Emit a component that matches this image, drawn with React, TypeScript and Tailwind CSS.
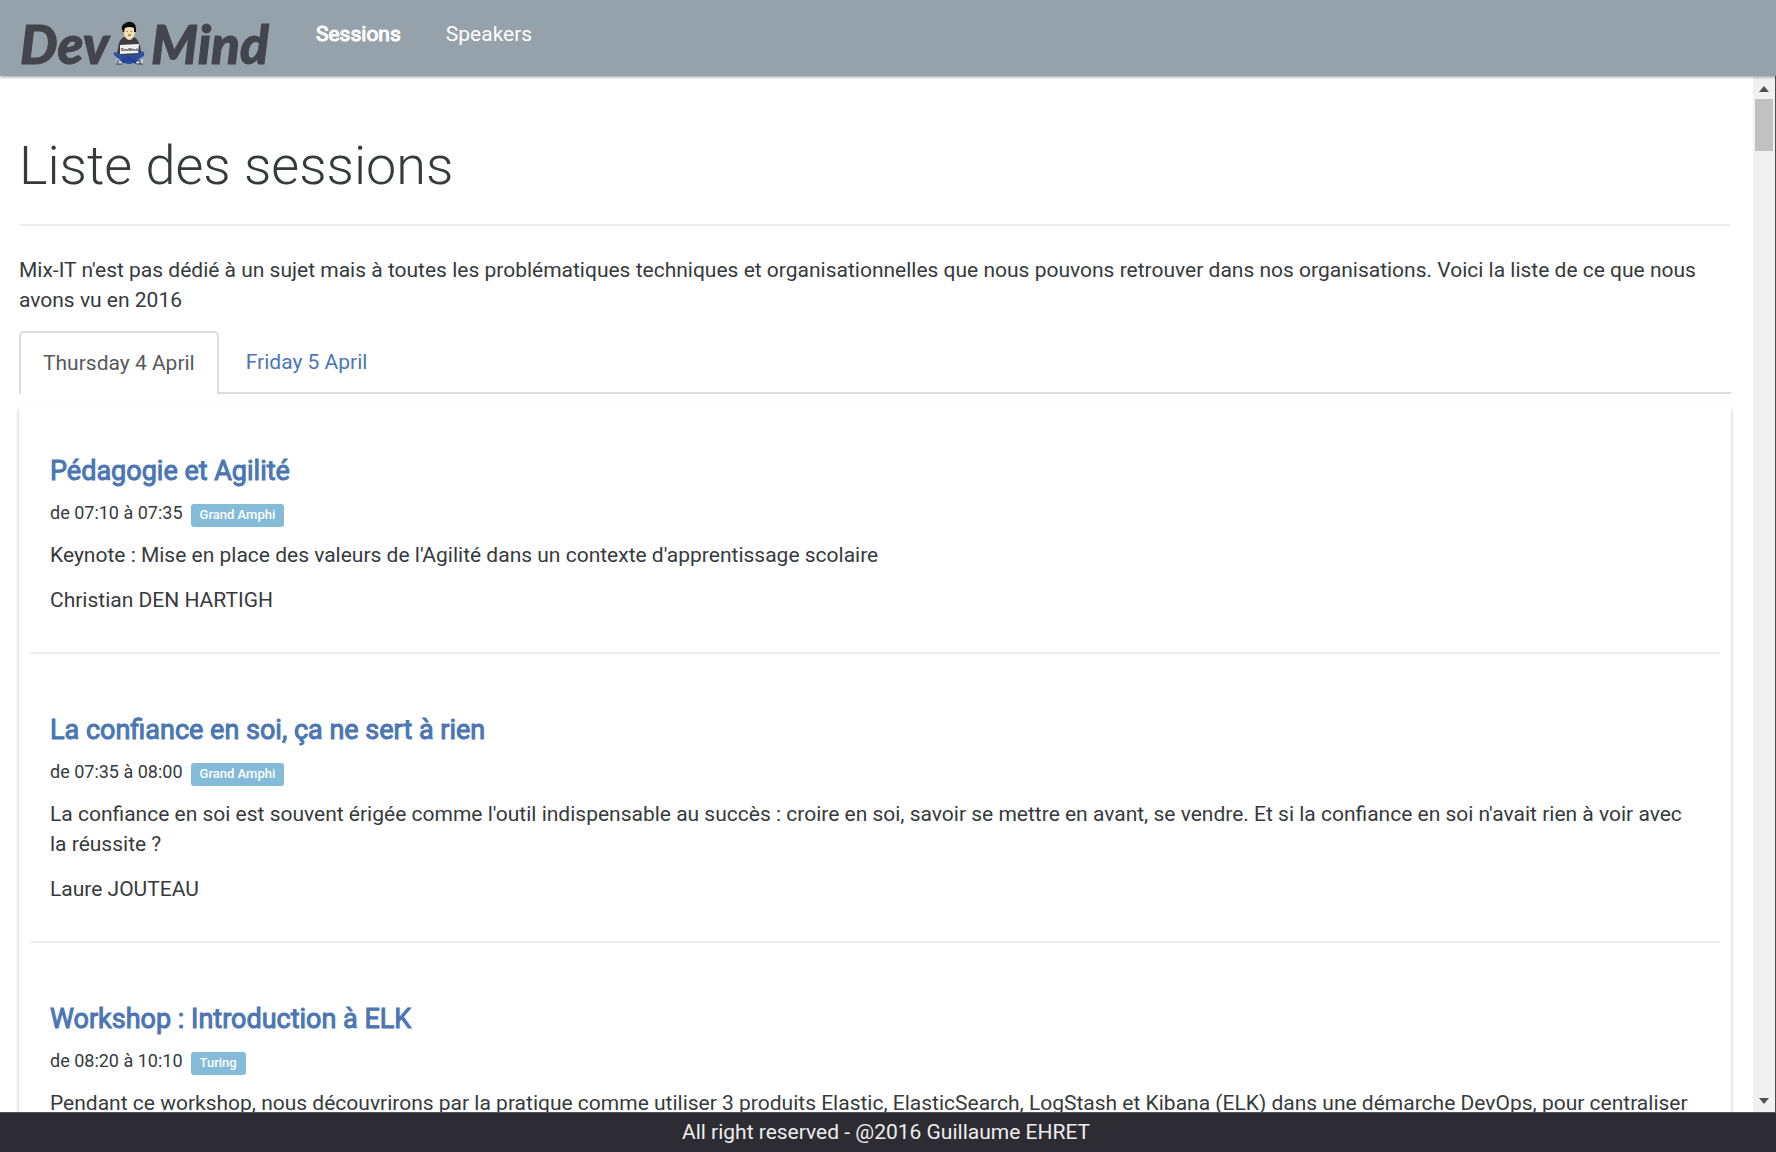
import React from "react";

type Session = {
  title: string;
  time: string;
  room: string;
  text: string;
  speaker: string;
};

const sessions: Session[] = [
  {
    title: "Pédagogie et Agilité",
    time: "de 07:10 à 07:35",
    room: "Grand Amphi",
    text: "Keynote : Mise en place des valeurs de l'Agilité dans un contexte d'apprentissage scolaire",
    speaker: "Christian DEN HARTIGH",
  },
  {
    title: "La confiance en soi, ça ne sert à rien",
    time: "de 07:35 à 08:00",
    room: "Grand Amphi",
    text: "La confiance en soi est souvent érigée comme l'outil indispensable au succès : croire en soi, savoir se mettre en avant, se vendre. Et si la confiance en soi n'avait rien à voir avec la réussite ?",
    speaker: "Laure JOUTEAU",
  },
  {
    title: "Workshop : Introduction à ELK",
    time: "de 08:20 à 10:10",
    room: "Turing",
    text: "Pendant ce workshop, nous découvrirons par la pratique comme utiliser 3 produits Elastic, ElasticSearch, LogStash et Kibana (ELK) dans une démarche DevOps, pour centraliser",
    speaker: "",
  },
];

function Logo() {
  return (
    <svg viewBox="0 0 256 62" className="h-[62px] w-[256px] overflow-visible" role="img" aria-label="Dev Mind">
      <g fill="#43454c" stroke="#43454c" strokeWidth="1" fontFamily="Lato, sans-serif" fontWeight="900" fontStyle="italic" fontSize="53">
        <text x="0" y="50">Dev</text>
        <text x="131" y="50">Mind</text>
      </g>
      <g transform="translate(92 8)">
        <path d="M12 15 Q7 17 6 26 L5 31 L11 35 L24 35 L29 30 Q28 18 22 15 Z" fill="#3d3e42" />
        <path d="M12 6 Q17 3 23 6 L23 12 Q21 18 17 18 Q13 17 12 12 Z" fill="#f5deaf" />
        <path d="M11 10 Q8 4 12 2 Q15 -1 19 0 Q25 1 24 10 L22 10 L22 6 Q17 4 13 6 L12 10 Z" fill="#0c0c10" />
        <path d="M15 9v1M19 9v1M16 13h3" stroke="#54483d" strokeWidth="1" />
        <path d="M3 30 Q0 31 3 34 L13 41 Q18 44 22 40 L32 34 Q33 30 30 29 L22 33 L10 33 Z" fill="#2b51a5" />
        <path d="M4 40 L15 34 L30 39 L24 42 L17 39 L10 42 Z" fill="#24458f" />
        <path d="M4 37 L9 39 L11 42 L5 42 Z M24 40 L31 37 L31 42 L24 43 Z" fill="#d8d2dc" />
        <path d="M4 42 L10 42 M24 42 L31 42 M28 38 L28 42 M6 38 L6 41" stroke="#33334a" />
        <path d="M8 23 L27 22 L26 31 L8 32 Z" fill="#f1f1f3" />
        <text x="9" y="29" fontFamily="Liberation Sans, sans-serif" fontSize="4" fontWeight="700" fill="#222">DevMind</text>
      </g>
    </svg>
  );
}

function Scrollbar() {
  return (
    <div aria-hidden="true" className="flex w-[23px] shrink-0 flex-col items-center justify-between border-r border-[#4b4b4b] bg-[#f1f1f1]">
      <div className="flex w-full flex-col items-center">
        <svg viewBox="0 0 22 23" className="h-[23px] w-[22px]">
          <path d="M6 16 L11 10 L16 16 Z" fill="#505050" />
        </svg>
        <div className="h-[52px] w-[18px] bg-[#c1c1c1]" />
      </div>
      <svg viewBox="0 0 22 22" className="size-[22px]">
        <path d="M6 8 L11 14 L16 8 Z" fill="#505050" />
      </svg>
    </div>
  );
}

function SessionItem({ session }: { session: Session }) {
  return (
    <article className="border-b-2 border-[#eeeeee] px-5 pt-[60px] pb-[36px] first:pt-[49px]">
      <h2 className="text-[27px] leading-[32px] text-[#4b76b4] [-webkit-text-stroke:1px_#4b76b4]">
        <a href="#session">{session.title}</a>
      </h2>
      <p className="mt-[11px] flex h-[30px] items-center gap-2">
        <span className="text-[18px] leading-[30px]">{session.time}</span>
        <span className="mt-1 rounded-[3px] bg-[#84bbd8] px-[9px] pb-[2px] text-[13px] leading-[21px] font-medium text-white">{session.room}</span>
      </p>
      <p className="mt-3">{session.text}</p>
      <p className="mt-[15px] mb-[1px]">{session.speaker}</p>
    </article>
  );
}

export default function App() {
  return (
    <div className="flex h-screen flex-col overflow-hidden bg-white font-[Roboto,sans-serif] text-[21px] leading-[30px] text-[#373a3c]">
      <header className="z-10 flex h-[76px] shrink-0 items-start bg-[#96a2ab] pl-5 shadow-[0_1px_3px_rgba(0,0,0,0.4)]">
        <a href="#home" className="pt-[14px]">
          <Logo />
        </a>
        <nav className="flex gap-[45px] pt-[19px] pl-10 text-white">
          <a href="#sessions" className="[-webkit-text-stroke:1px_white]">Sessions</a>
          <a href="#speakers">Speakers</a>
        </nav>
      </header>
      <div className="flex min-h-0 flex-1">
        <main className="min-w-0 flex-1 overflow-hidden pr-[22px] pl-[19px]">
          <h1 className="border-b-2 border-[#eeeeee] pt-[59px] pb-[27px] text-[54px] leading-[62px] font-light">Liste des sessions</h1>
          <p className="mt-[29px]">
            Mix-IT n'est pas dédié à un sujet mais à toutes les problématiques techniques et organisationnelles que nous pouvons retrouver dans nos organisations. Voici la liste de ce que nous avons vu en 2016
          </p>
          <div role="tablist" className="mt-4 flex border-b-2 border-[#dddddd]">
            <button type="button" role="tab" aria-selected="true" className="-mb-[2px] h-[63px] rounded-t-[5px] border-2 border-b-0 border-[#dddddd] bg-white px-[22px] pb-[2px] text-[#55595c]">Thursday 4 April</button>
            <button type="button" role="tab" aria-selected="false" className="ml-[3px] px-6 text-[#4b76b4]">Friday 5 April</button>
          </div>
          <section className="mt-3 px-[11px] shadow-[0_3px_4px_rgba(0,0,0,0.26)]">
            {sessions.map((session) => (
              <SessionItem key={session.title} session={session} />
            ))}
          </section>
        </main>
        <Scrollbar />
      </div>
      <footer className="z-10 h-10 shrink-0 border-t border-[#55555b] bg-[#2d2c33] pr-1 text-center leading-[39px] text-[#eeeeee]">All right reserved - @2016 Guillaume EHRET</footer>
    </div>
  );
}
